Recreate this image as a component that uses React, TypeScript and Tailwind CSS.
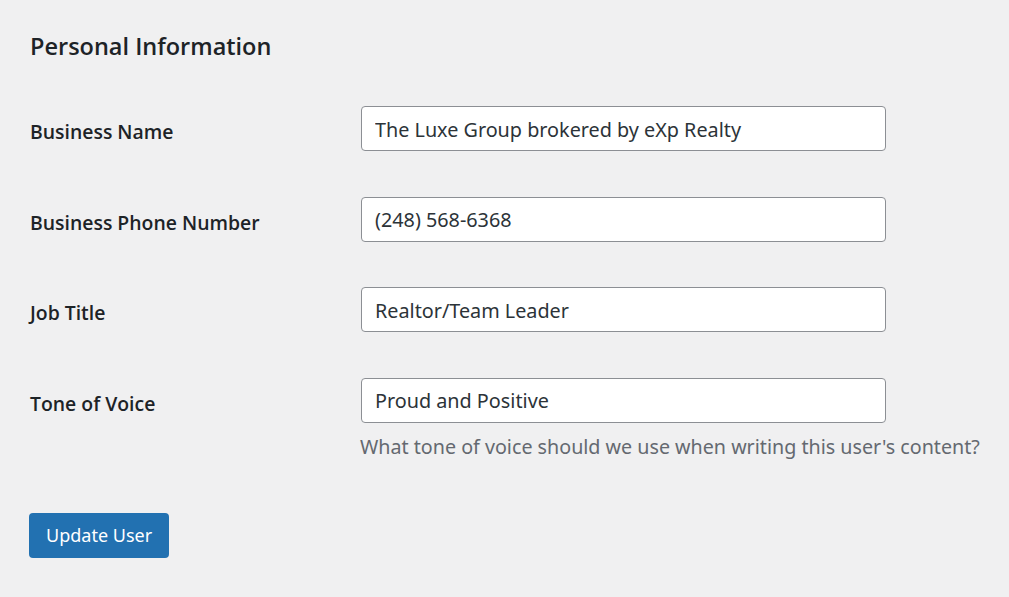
const fields = [
  { label: "Business Name", value: "The Luxe Group brokered by eXp Realty" },
  { label: "Business Phone Number", value: "(248) 568-6368" },
  { label: "Job Title", value: "Realtor/Team Leader" },
  {
    label: "Tone of Voice",
    value: "Proud and Positive",
    help: "What tone of voice should we use when writing this user's content?",
  },
];

export default function App() {
  return (
    <div className="min-h-screen bg-[#f0f0f1] px-[30px] pt-[29px] text-[#1d2327] font-['Noto_Sans',sans-serif]">
      <h2 className="font-['Open_Sans',sans-serif] text-[23.5px] font-semibold leading-[34px]">
        Personal Information
      </h2>

      <div className="mt-[43px] flex flex-col gap-[45.5px]">
        {fields.map((f) => (
          <div key={f.label} className="flex items-start">
            <label className="w-[331px] shrink-0 pt-[13px] font-['Open_Sans',sans-serif] text-[19.4px] font-semibold leading-[26px]">
              {f.label}
            </label>
            <div className="flex flex-col">
              <input
                readOnly
                value={f.value}
                className="h-[45px] w-[525px] rounded-[4px] border border-[#8c8f94] bg-white px-[13px] pt-[1px] text-[19.8px] text-[#2c3338] outline-none"
              />
              {f.help && (
                <p className="mt-[10px] -ml-px whitespace-nowrap text-[19.7px] leading-[28px] text-[#646970]">
                  {f.help}
                </p>
              )}
            </div>
          </div>
        ))}
      </div>

      <button className="mt-[52px] -ml-px h-[45px] rounded-[4px] bg-[#2271b1] px-[17px] text-[18px] text-white">
        Update User
      </button>
    </div>
  );
}
